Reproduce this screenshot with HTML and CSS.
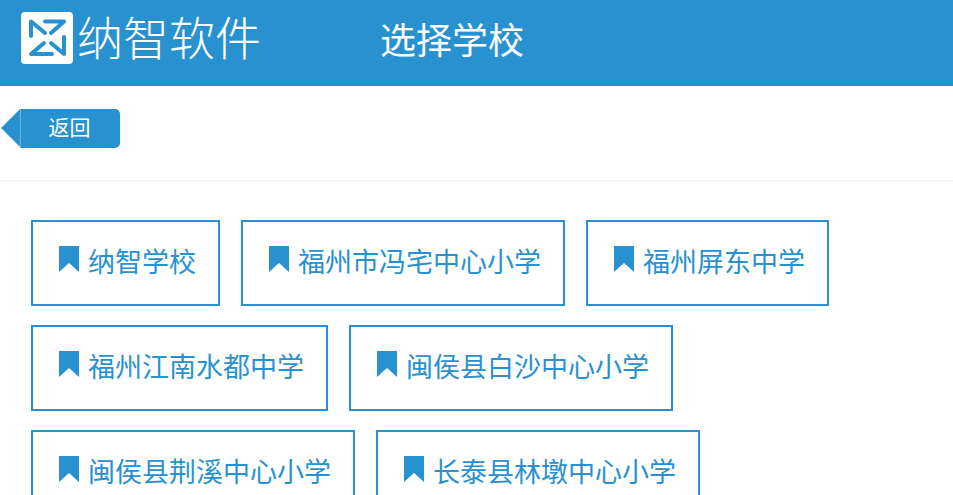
FILE: index.html
```html
<!DOCTYPE html>
<html>
<head>
    <meta charset="utf-8">
    <title>选择学校</title>
    <link rel="stylesheet" href="styles.css">
</head>
<body>
    <div class="header">
        <div class="brand">
            <svg class="logo" viewBox="0 0 52 52">
                <rect width="52" height="52" rx="4" fill="#fff"/>
                <g fill="none" stroke="#2891cf" stroke-width="4" stroke-linecap="round" stroke-linejoin="round">
                    <path d="M10 24V9.5L24 21"/>
                    <path d="M24 9.5H43L30 21"/>
                    <path d="M43 25V42L30 31"/>
                    <path d="M31 42H10L23 31"/>
                </g>
            </svg>
            <span class="brand-name">纳智软件</span>
        </div>
        <h1 class="page-title">选择学校</h1>
    </div>

    <div class="toolbar">
        <a class="back-button">返回</a>
    </div>

    <div class="school-list">
        <a class="school"><svg class="bookmark" viewBox="0 0 20 26"><path d="M0 0H20V26L10 17L0 26Z"/></svg>纳智学校</a>
        <a class="school"><svg class="bookmark" viewBox="0 0 20 26"><path d="M0 0H20V26L10 17L0 26Z"/></svg>福州市冯宅中心小学</a>
        <a class="school"><svg class="bookmark" viewBox="0 0 20 26"><path d="M0 0H20V26L10 17L0 26Z"/></svg>福州屏东中学</a>
        <a class="school"><svg class="bookmark" viewBox="0 0 20 26"><path d="M0 0H20V26L10 17L0 26Z"/></svg>福州江南水都中学</a>
        <a class="school"><svg class="bookmark" viewBox="0 0 20 26"><path d="M0 0H20V26L10 17L0 26Z"/></svg>闽侯县白沙中心小学</a>
        <a class="school"><svg class="bookmark" viewBox="0 0 20 26"><path d="M0 0H20V26L10 17L0 26Z"/></svg>闽侯县荆溪中心小学</a>
        <a class="school"><svg class="bookmark" viewBox="0 0 20 26"><path d="M0 0H20V26L10 17L0 26Z"/></svg>长泰县林墩中心小学</a>
    </div>
</body>
</html>
```

FILE: styles.css
```css
html, body {
    height: 100%;
    overflow: hidden;
}

body {
    margin: 0;
    background: #fff;
    font-family: "Noto Sans CJK SC", "Noto Sans", sans-serif;
    color: #2891cf;
}

.header {
    display: flex;
    align-items: center;
    height: 86px;
    background: #2891cf;
    color: #fff;
}

.brand {
    display: flex;
    align-items: center;
    width: 380px;
    padding: 0 0 10px 21px;
    box-sizing: border-box;
}

.logo {
    width: 52px;
    height: 52px;
    flex: none;
}

.brand-name {
    margin: 0 0 6px 4px;
    font-size: 46px;
    line-height: 52px;
    font-weight: 300;
    white-space: nowrap;
}

.page-title {
    margin: 0 0 11px 0;
    font-size: 36px;
    line-height: 52px;
    font-weight: 400;
}

.toolbar {
    display: flex;
    height: 96px;
    padding: 23px 0 0 20px;
    box-sizing: border-box;
    border-bottom: 2px solid #f6f6f6;
}

.back-button {
    position: relative;
    width: 100px;
    height: 39px;
    line-height: 35px;
    text-align: center;
    font-size: 21px;
    color: #fff;
    background: #2891cf;
    border-left: 1px solid #6db5e0;
    box-sizing: border-box;
    border-radius: 0 5px 5px 0;
    padding-right: 2px;
}

.back-button::before {
    content: "";
    position: absolute;
    left: -20px;
    top: 0;
    border-style: solid;
    border-width: 19.5px 19px 19.5px 0;
    border-color: transparent #2891cf transparent transparent;
}

.school-list {
    display: flex;
    flex-wrap: wrap;
    gap: 19px 21px;
    padding: 38px 0 0 31px;
}

.school {
    display: flex;
    align-items: center;
    height: 86px;
    padding: 0 22px 6px 26px;
    box-sizing: border-box;
    border: 2px solid #2891cf;
    font-size: 27px;
    white-space: nowrap;
}

.bookmark {
    width: 20px;
    height: 26px;
    margin-right: 9px;
    margin-bottom: 2px;
    fill: #2891cf;
    flex: none;
}
```
